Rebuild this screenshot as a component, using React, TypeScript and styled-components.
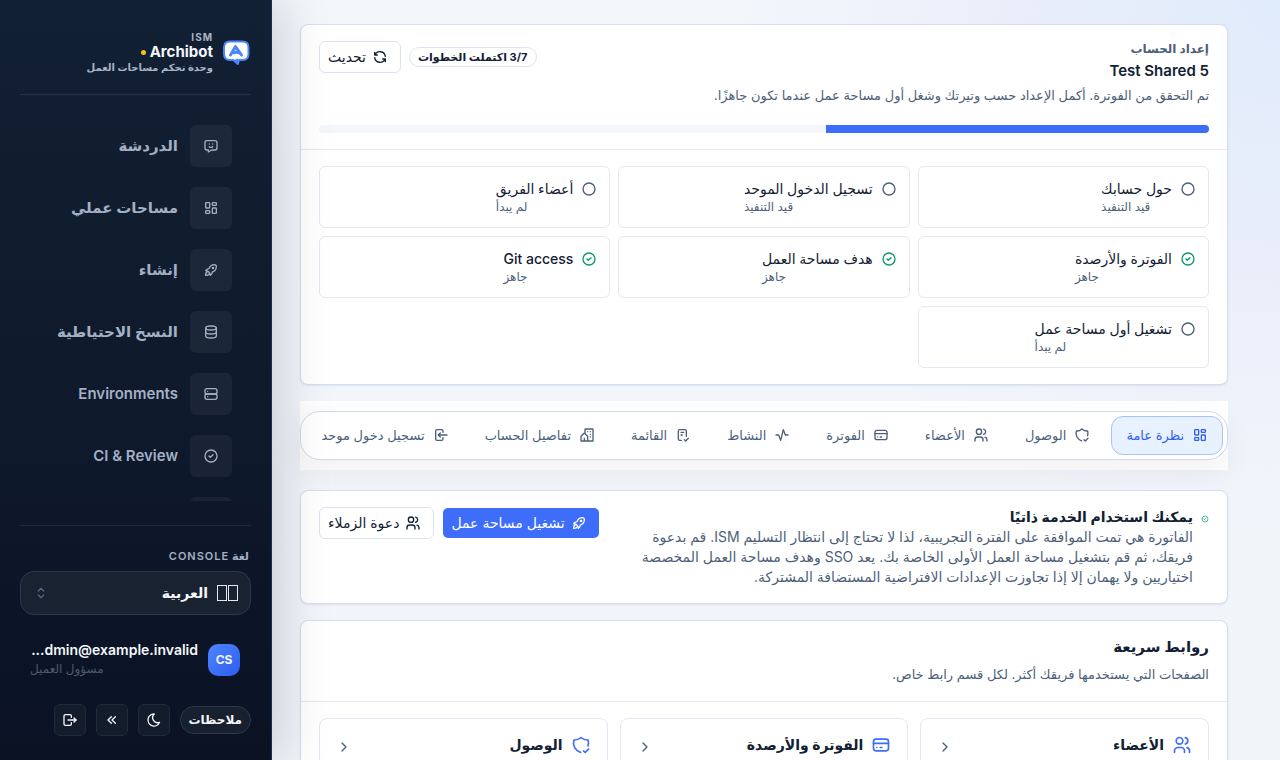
import React from "react";
import styled, { createGlobalStyle, css } from "styled-components";
import {
  TbActivity,
  TbBuildingCommunity,
  TbChecklist,
  TbChevronRight,
  TbChevronsLeft,
  TbCircle,
  TbCircleCheck,
  TbCreditCard,
  TbDatabase,
  TbLayoutDashboard,
  TbLogin,
  TbLogout,
  TbMessageChatbot,
  TbMoon,
  TbRefresh,
  TbRocket,
  TbSelector,
  TbServer,
  TbShieldCheck,
  TbUsers,
} from "react-icons/tb";

const GlobalStyle = createGlobalStyle`
  *, *::before, *::after { box-sizing: border-box; }
  body {
    margin: 0;
    font-family: Inter, "DejaVu Sans", sans-serif;
    font-size: 14px;
    line-height: 20px;
    color: #122033;
    background: #f2f5fa;
  }
  button, select { font: inherit; color: inherit; cursor: pointer; }
  h1, h2, h3, p, ul { margin: 0; padding: 0; }
  ul { list-style: none; }
  a { color: inherit; text-decoration: none; }
  svg { flex: none; display: block; }
`;

const Shell = styled.div`
  display: flex;
  height: 100vh;
  overflow: hidden;
  background: radial-gradient(circle at 100% 0, #e0ebfb 0, #e9eefa 260px, rgba(241, 245, 250, 0) 540px),
    linear-gradient(180deg, #f3f7fc, #f1f4f9);
`;

const Sidebar = styled.aside`
  position: relative;
  z-index: 2;
  flex: none;
  display: flex;
  flex-direction: column;
  width: 272px;
  padding: 30px 20px 24px;
  color: #f3f6fb;
  background: linear-gradient(180deg, #122033 0%, #0f1b2d 45%, #0a1224 100%);
  border-right: 1px solid #1c2f50;
  box-shadow: 8px 0 48px rgba(15, 15, 20, 0.18);
`;

const Brand = styled.a`
  display: flex;
  align-items: center;
  gap: 8px;
  padding-bottom: 20px;
  border-bottom: 1px solid #253244;
`;

const BrandText = styled.span`
  display: flex;
  flex-direction: column;
  font-weight: 700;
`;

const BrandOver = styled.span`
  font-size: 10px;
  line-height: 14px;
  letter-spacing: 1px;
  color: #a7b4c6;
`;

const BrandName = styled.span`
  display: flex;
  align-items: center;
  gap: 4px;
  font-size: 15px;
  line-height: 16px;
`;

const Dot = styled.i`
  width: 5px;
  height: 5px;
  border-radius: 50%;
  background: #f5c518;
`;

const BrandSub = styled.span`
  font-size: 10px;
  line-height: 14px;
  color: #a7b4c6;
`;

const Nav = styled.nav`
  flex: 1;
  min-height: 0;
  margin: 20px 0 24px;
  overflow: hidden;
`;

const NavItem = styled.a`
  display: flex;
  align-items: center;
  gap: 12px;
  height: 62px;
  padding: 0 19px;
  font-size: 15px;
  font-weight: 600;
  color: #a3b0c4;
`;

const NavIcon = styled.span`
  display: grid;
  place-items: center;
  width: 42px;
  height: 42px;
  border-radius: 6px;
  background: rgba(255, 255, 255, 0.05);
`;

const SideFooter = styled.div`
  display: flex;
  flex-direction: column;
  border-top: 1px solid #1f2b3d;
  padding-top: 22px;
`;

const LangLabel = styled.label`
  padding: 0 2px;
  font-size: 11px;
  line-height: 16px;
  font-weight: 600;
  letter-spacing: 1px;
  color: #a3b0c4;
`;

const LangBox = styled.div`
  display: flex;
  align-items: center;
  height: 44px;
  margin-top: 7px;
  padding: 0 12px;
  border: 1px solid #2d394b;
  border-radius: 14px;
  background: #192231;
  color: #546582;
`;

const LangSelect = styled.select`
  flex: 1;
  appearance: none;
  border: 0;
  padding: 0;
  background: transparent;
  color: #f6f8fb;
  font-weight: 700;
`;

const Flag = styled.span`
  display: flex;
  gap: 1px;
  margin-left: 9px;

  &::before,
  &::after {
    content: "";
    width: 10px;
    height: 16px;
    border: 1px solid #e3e6ec;
  }
`;

const User = styled.div`
  display: flex;
  align-items: center;
  gap: 10px;
  margin-top: 25px;
  padding: 0 11px 0 10px;
`;

const Avatar = styled.span`
  display: grid;
  place-items: center;
  width: 32px;
  height: 32px;
  border-radius: 10px;
  background: linear-gradient(135deg, #4c86ff, #2f5cf0);
  font-size: 12px;
  font-weight: 700;
`;

const UserText = styled.div`
  flex: 1;
  display: flex;
  flex-direction: column;
  padding-bottom: 2px;
`;

const UserMail = styled.span`
  direction: ltr;
  text-align: right;
  font-weight: 600;
`;

const UserRole = styled.span`
  text-align: left;
  font-size: 12px;
  line-height: 18px;
  color: #4d5b73;
`;

const SideActions = styled.div`
  display: flex;
  align-items: center;
  gap: 10px;
  margin-top: 24px;
`;

const SquareButton = styled.button`
  display: grid;
  place-items: center;
  width: 32px;
  height: 32px;
  padding: 0;
  border: 1px solid #202c3c;
  border-radius: 6px;
  background: #121c2a;
`;

const Feedback = styled.button`
  height: 28px;
  padding: 0 8px;
  border: 1px solid #2d394a;
  border-radius: 14px;
  background: #17202e;
  font-size: 12px;
  line-height: 16px;
  font-weight: 700;
`;

const Main = styled.main`
  flex: 1;
  min-width: 0;
  display: flex;
  flex-direction: column;
  padding: 24px 52px 24px 28px;
  overflow: hidden;
`;

const Card = styled.section`
  flex: none;
  background: #fff;
  border: 1px solid #d3deee;
  border-radius: 8px;
  box-shadow: 0 1px 2px rgba(18, 32, 51, 0.08);
`;

const SetupHead = styled.header`
  padding: 16px 18px;
  border-bottom: 1px solid #e3e8f3;
`;

const HeadRow = styled.div`
  display: flex;
  align-items: flex-start;
  justify-content: space-between;
  gap: 16px;
`;

const Eyebrow = styled.p`
  font-size: 12px;
  line-height: 16px;
  font-weight: 600;
  color: #4d5f7a;
`;

const SetupTitle = styled.h1`
  margin-top: 2px;
  font-size: 15px;
  line-height: 24px;
  font-weight: 600;
`;

const Muted = styled.p<{ $small?: boolean }>`
  font-size: ${(p) => (p.$small ? 13 : 14)}px;
  color: #4d5f7a;
`;

const SetupText = styled(Muted)`
  margin-top: 2px;
`;

const Actions = styled.div`
  display: flex;
  align-items: center;
  gap: 8px;
`;

const Badge = styled.span`
  padding: 0 9px 0 8px;
  border: 1px solid #dbe4f2;
  border-radius: 10px;
  font-size: 11px;
  line-height: 18px;
  font-weight: 700;
`;

const Button = styled.button<{ $primary?: boolean }>`
  display: flex;
  align-items: center;
  gap: 6px;
  height: 32px;
  padding: 0 12px 0 8px;
  border: 1px solid #dbe3f3;
  border-radius: 6px;
  background: #fff;
  white-space: nowrap;
  ${(p) =>
    p.$primary &&
    css`
      border-color: transparent;
      background: #3d6df9;
      background-clip: padding-box;
      color: #fff;
    `}
`;

const Track = styled.div`
  height: 8px;
  margin-top: 20px;
  border-radius: 4px;
  overflow: hidden;
  background: #f3f7fc;
`;

const Fill = styled.div`
  height: 100%;
  background: #3d6df9;
`;

const Steps = styled.ul`
  display: grid;
  grid-template-columns: repeat(3, 1fr);
  gap: 8px;
  padding: 16px 18px;
`;

const Step = styled.li`
  display: flex;
  align-items: flex-start;
  gap: 8px;
  padding: 12px;
  border: 1px solid #e3e8f3;
  border-radius: 6px;
`;

const StepIcon = styled.span<{ $done: boolean }>`
  margin-top: 2px;
  color: ${(p) => (p.$done ? "#0a9a6a" : "#4d5f7a")};
`;

const StepTitle = styled.h3`
  font-size: 14px;
  line-height: 20px;
  font-weight: 500;
`;

const StepState = styled.p`
  text-align: left;
  font-size: 12px;
  line-height: 16px;
  color: #4d5f7a;
`;

const TabStrip = styled.div`
  flex: none;
  margin: 16px 0 20px;
  padding: 10px 0;
  background: #fff;
`;

const Tabs = styled.nav`
  display: flex;
  gap: 6px;
  padding: 4px;
  border: 1px solid #d0d9ea;
  border-radius: 20px;
  background: #fff;
  box-shadow: 0 12px 32px rgba(18, 18, 24, 0.06);
`;

const Tab = styled.a<{ $active?: boolean }>`
  display: flex;
  align-items: center;
  gap: 8px;
  height: 39px;
  padding: 0 14px 1px;
  border: 1px solid transparent;
  border-radius: 12px;
  font-size: 13px;
  white-space: nowrap;
  color: #4d5f7a;
  ${(p) =>
    p.$active &&
    css`
      border-color: #a9c2f7;
      background: #e8f2ff;
      color: #315ff0;
    `}
`;

const Callout = styled(Card)`
  display: flex;
  align-items: flex-start;
  gap: 8px;
  padding: 16px 18px;
  color: #0a9a6a;
`;

const CalloutIcon = styled.span`
  padding-top: 8px;
`;

const CalloutText = styled.div`
  flex: 1;
  color: #122033;
  padding-left: 32px;
`;

const CalloutTitle = styled.h2`
  font-size: 14px;
  line-height: 20px;
  font-weight: 600;
`;

const CalloutActions = styled(Actions)`
  color: #122033;
`;

const Links = styled(Card)`
  margin-top: 16px;
`;

const LinksHead = styled.header`
  display: flex;
  flex-direction: column;
  gap: 5px;
  padding: 14px 18px 17px;
  border-bottom: 1px solid #e3e8f3;
`;

const LinksTitle = styled.h2`
  font-size: 15px;
  line-height: 24px;
  font-weight: 600;
`;

const LinkGrid = styled.div`
  display: grid;
  grid-template-columns: repeat(3, 1fr);
  gap: 12px;
  padding: 16px 18px;
`;

const LinkTile = styled.a`
  display: flex;
  align-items: flex-start;
  gap: 8px;
  min-height: 110px;
  padding: 16px;
  border: 1px solid #e3e8f3;
  border-radius: 8px;
  color: #3d6df9;
`;

const LinkName = styled.h3`
  flex: 1;
  font-size: 14px;
  line-height: 20px;
  font-weight: 600;
  color: #122033;
`;

const LinkArrow = styled.span`
  padding-top: 4px;
  color: #4d5f7a;
`;

const Logo = () => (
  <svg width="30" height="28" viewBox="0 0 30 28" aria-hidden="true">
    <path
      d="M9 3.500h12.500c4 0 6 2.200 6 6v6.500c0 4-2 6-6 6h-3.500l-1.200 4-4.300-4H9c-4 0-6-2-6-6V9.500c0-3.800 2-6 6-6Z"
      fill="#fff"
      stroke="#4b86ff"
      strokeWidth="2"
      strokeLinejoin="round"
    />
    <path d="m13.500 22 3.300 4 1.200-4-1.500-1.500Z" fill="#4b86ff" />
    <path
      d="M9.500 17 14.500 8.500 20.500 17M13 14.800c2.200-.9 4.400-.6 6 .6"
      fill="none"
      stroke="#4b86ff"
      strokeWidth="3"
      strokeLinecap="round"
      strokeLinejoin="round"
    />
  </svg>
);

const navItems = [
  { label: "الدردشة", Icon: TbMessageChatbot },
  { label: "مساحات عملي", Icon: TbLayoutDashboard },
  { label: "إنشاء", Icon: TbRocket },
  { label: "النسخ الاحتياطية", Icon: TbDatabase },
  { label: "Environments", Icon: TbServer },
  { label: "CI & Review", Icon: TbCircleCheck },
  { label: "", Icon: TbActivity },
];

const steps = [
  { title: "حول حسابك", state: "قيد التنفيذ", done: false },
  { title: "تسجيل الدخول الموحد", state: "قيد التنفيذ", done: false },
  { title: "أعضاء الفريق", state: "لم يبدأ", done: false },
  { title: "الفوترة والأرصدة", state: "جاهز", done: true },
  { title: "هدف مساحة العمل", state: "جاهز", done: true },
  { title: "Git access", state: "جاهز", done: true },
  { title: "تشغيل أول مساحة عمل", state: "لم يبدأ", done: false },
];

const tabs = [
  { label: "نظرة عامة", Icon: TbLayoutDashboard },
  { label: "الوصول", Icon: TbShieldCheck },
  { label: "الأعضاء", Icon: TbUsers },
  { label: "الفوترة", Icon: TbCreditCard },
  { label: "النشاط", Icon: TbActivity },
  { label: "القائمة", Icon: TbChecklist },
  { label: "تفاصيل الحساب", Icon: TbBuildingCommunity },
  { label: "تسجيل دخول موحد", Icon: TbLogin },
];

const links = [
  { label: "الأعضاء", Icon: TbUsers },
  { label: "الفوترة والأرصدة", Icon: TbCreditCard },
  { label: "الوصول", Icon: TbShieldCheck },
];

export default function App() {
  const done = steps.filter((s) => s.done).length;
  return (
    <>
      <GlobalStyle />
      <Shell lang="ar">
        <Sidebar dir="rtl">
          <Brand href="#">
            <Logo />
            <BrandText>
              <BrandOver>ISM</BrandOver>
              <BrandName>
                Archibot
                <Dot />
              </BrandName>
              <BrandSub>وحدة تحكم مساحات العمل</BrandSub>
            </BrandText>
          </Brand>
          <Nav>
            {navItems.map(({ label, Icon }, i) => (
              <NavItem href="#" key={i}>
                <NavIcon>
                  <Icon size={16} />
                </NavIcon>
                {label}
              </NavItem>
            ))}
          </Nav>
          <SideFooter>
            <LangLabel htmlFor="lang">لغة CONSOLE</LangLabel>
            <LangBox>
              <Flag />
              <LangSelect id="lang">
                <option>العربية</option>
              </LangSelect>
              <TbSelector size={16} />
            </LangBox>
            <User>
              <Avatar>CS</Avatar>
              <UserText>
                <UserMail>...dmin@example.invalid</UserMail>
                <UserRole>مسؤول العميل</UserRole>
              </UserText>
            </User>
            <SideActions>
              <Feedback>ملاحظات</Feedback>
              <SquareButton aria-label="الوضع الداكن">
                <TbMoon size={16} />
              </SquareButton>
              <SquareButton aria-label="طي">
                <TbChevronsLeft size={16} />
              </SquareButton>
              <SquareButton aria-label="خروج">
                <TbLogout size={16} />
              </SquareButton>
            </SideActions>
          </SideFooter>
        </Sidebar>

        <Main dir="rtl">
          <Card>
            <SetupHead>
              <HeadRow>
                <div>
                  <Eyebrow>إعداد الحساب</Eyebrow>
                  <SetupTitle>Test Shared 5</SetupTitle>
                  <SetupText $small>
                    تم التحقق من الفوترة. أكمل الإعداد حسب وتيرتك وشغل أول مساحة عمل عندما تكون جاهزًا.
                  </SetupText>
                </div>
                <Actions>
                  <Badge>3/7 اكتملت الخطوات</Badge>
                  <Button>
                    <TbRefresh size={16} />
                    تحديث
                  </Button>
                </Actions>
              </HeadRow>
              <Track>
                <Fill style={{ width: `${Math.round((done / steps.length) * 100)}%` }} />
              </Track>
            </SetupHead>
            <Steps>
              {steps.map((s) => (
                <Step key={s.title}>
                  <StepIcon $done={s.done}>{s.done ? <TbCircleCheck size={16} /> : <TbCircle size={16} />}</StepIcon>
                  <div>
                    <StepTitle>{s.title}</StepTitle>
                    <StepState>{s.state}</StepState>
                  </div>
                </Step>
              ))}
            </Steps>
          </Card>

          <TabStrip>
            <Tabs>
              {tabs.map(({ label, Icon }, i) => (
                <Tab href="#" key={label} $active={i === 0}>
                  <Icon size={16} />
                  {label}
                </Tab>
              ))}
            </Tabs>
          </TabStrip>

          <Callout>
            <CalloutIcon>
              <TbCircleCheck size={8} />
            </CalloutIcon>
            <CalloutText>
              <CalloutTitle>يمكنك استخدام الخدمة ذاتيًا</CalloutTitle>
              <Muted>
                الفاتورة هي تمت الموافقة على الفترة التجريبية، لذا لا تحتاج إلى انتظار التسليم ISM. قم بدعوة فريقك، ثم قم
                بتشغيل مساحة العمل الأولى الخاصة بك. يعد SSO وهدف مساحة العمل المخصصة اختياريين ولا يهمان إلا إذا تجاوزت
                الإعدادات الافتراضية المستضافة المشتركة.
              </Muted>
            </CalloutText>
            <CalloutActions>
              <Button $primary>
                <TbRocket size={16} />
                تشغيل مساحة عمل
              </Button>
              <Button>
                <TbUsers size={16} />
                دعوة الزملاء
              </Button>
            </CalloutActions>
          </Callout>

          <Links>
            <LinksHead>
              <LinksTitle>روابط سريعة</LinksTitle>
              <Muted $small>الصفحات التي يستخدمها فريقك أكثر. لكل قسم رابط خاص.</Muted>
            </LinksHead>
            <LinkGrid>
              {links.map(({ label, Icon }) => (
                <LinkTile href="#" key={label}>
                  <Icon size={20} />
                  <LinkName>{label}</LinkName>
                  <LinkArrow>
                    <TbChevronRight size={16} />
                  </LinkArrow>
                </LinkTile>
              ))}
            </LinkGrid>
          </Links>
        </Main>
      </Shell>
    </>
  );
}
